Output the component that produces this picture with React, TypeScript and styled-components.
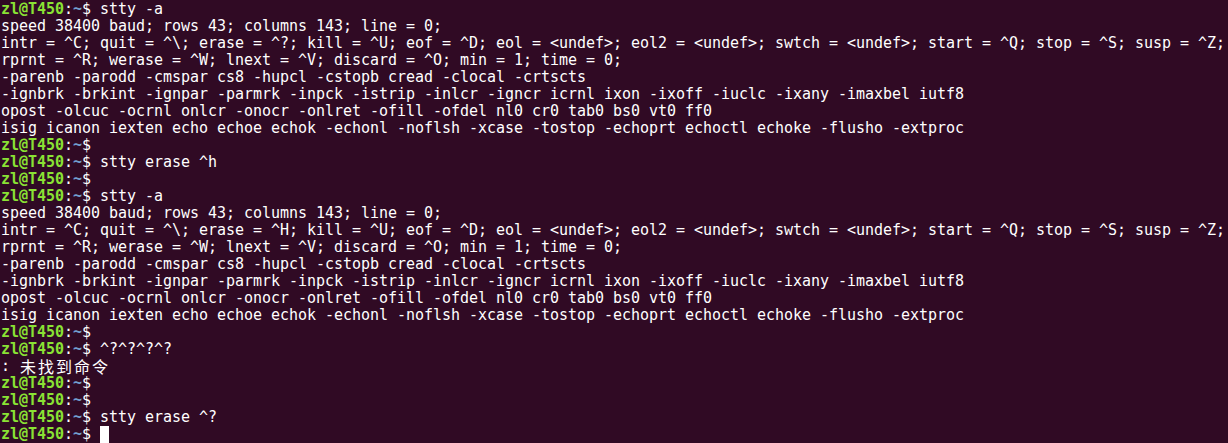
import React from "react";
import styled, { createGlobalStyle } from "styled-components";

const Global = createGlobalStyle`
  html, body {
    margin: 0;
    padding: 0;
    background: #300a24;
    overflow: hidden;
  }
`;

const Terminal = styled.div`
  width: 1228px;
  height: 443px;
  box-sizing: border-box;
  padding: 1px 0 0 1px;
  background: #300a24;
  color: #ffffff;
  font-family: "DejaVu Sans Mono", monospace;
  font-size: 15px;
  letter-spacing: -0.03px;
  overflow: hidden;
`;

const Line = styled.div`
  height: 17px;
  line-height: 17px;
  white-space: pre;
`;

const User = styled.span`
  color: #8ae234;
  font-weight: bold;
`;

const Dir = styled.span`
  color: #729fcf;
  font-weight: bold;
`;

const Wide = styled.span`
  display: inline-block;
  padding-left: 1px;
  font-family: "Noto Sans CJK SC", sans-serif;
  font-size: 16px;
  letter-spacing: 2px;
  vertical-align: top;
  line-height: 17px;
`;

const Cursor = styled.span`
  display: inline-block;
  width: 9px;
  height: 17px;
  background: #ffffff;
  vertical-align: top;
`;

const Prompt: React.FC<{ cmd?: string; cursor?: boolean }> = ({ cmd, cursor }) => (
  <Line>
    <User>zl@T450</User>:<Dir>~</Dir>$ {cmd ?? ""}
    {cursor ? <Cursor /> : null}
  </Line>
);

const sttyOut = (erase: string) => [
  "speed 38400 baud; rows 43; columns 143; line = 0;",
  `intr = ^C; quit = ^\\; erase = ${erase}; kill = ^U; eof = ^D; eol = <undef>; eol2 = <undef>; swtch = <undef>; start = ^Q; stop = ^S; susp = ^Z;`,
  "rprnt = ^R; werase = ^W; lnext = ^V; discard = ^O; min = 1; time = 0;",
  "-parenb -parodd -cmspar cs8 -hupcl -cstopb cread -clocal -crtscts",
  "-ignbrk -brkint -ignpar -parmrk -inpck -istrip -inlcr -igncr icrnl ixon -ixoff -iuclc -ixany -imaxbel iutf8",
  "opost -olcuc -ocrnl onlcr -onocr -onlret -ofill -ofdel nl0 cr0 tab0 bs0 vt0 ff0",
  "isig icanon iexten echo echoe echok -echonl -noflsh -xcase -tostop -echoprt echoctl echoke -flusho -extproc",
];

export default function App() {
  return (
    <>
      <Global />
      <Terminal>
        <Prompt cmd="stty -a" />
        {sttyOut("^?").map((l, i) => (
          <Line key={"a" + i}>{l}</Line>
        ))}
        <Prompt />
        <Prompt cmd="stty erase ^h" />
        <Prompt />
        <Prompt cmd="stty -a" />
        {sttyOut("^H").map((l, i) => (
          <Line key={"b" + i}>{l}</Line>
        ))}
        <Prompt />
        <Prompt cmd="^?^?^?^?" />
        <Line>
          {": "}
          <Wide>未找到命令</Wide>
        </Line>
        <Prompt />
        <Prompt />
        <Prompt cmd="stty erase ^?" />
        <Prompt cursor />
      </Terminal>
    </>
  );
}
